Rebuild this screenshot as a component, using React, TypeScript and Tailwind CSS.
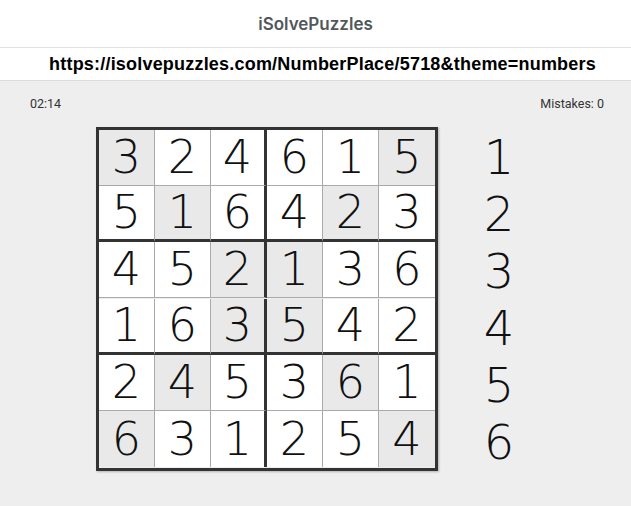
import React from "react";

const board = [
  [3, 2, 4, 6, 1, 5],
  [5, 1, 6, 4, 2, 3],
  [4, 5, 2, 1, 3, 6],
  [1, 6, 3, 5, 4, 2],
  [2, 4, 5, 3, 6, 1],
  [6, 3, 1, 2, 5, 4],
];

// diagonal cells get the grey fill
const isShaded = (r: number, c: number) => c === r || c === 5 - r;

const digitFont = { fontFamily: '"DejaVu Sans", sans-serif' };

function Cell({ r, c, value }: { r: number; c: number; value: number }) {
  const right =
    c === 5 ? "" : c === 2 ? "border-r-[3px] border-r-[#333]" : "border-r border-r-[#aaa]";
  const bottom =
    r === 5 ? "" : r === 1 || r === 3 ? "border-b-[3px] border-b-[#333]" : "border-b border-b-[#aaa]";
  return (
    <div
      className={`h-[56px] flex items-center justify-center text-[46px] font-extralight text-[#111] ${right} ${bottom} ${
        isShaded(r, c) ? "bg-[#e9e9e9]" : "bg-white"
      }`}
      style={digitFont}
    >
      {value}
    </div>
  );
}

export default function App() {
  return (
    <div className="min-h-[506px] bg-[#eeeeee] font-['Roboto',sans-serif]">
      {/* Header */}
      <header className="h-12 bg-white border-b border-[#e2e2e2] flex items-center justify-center pt-[3px]">
        <span className="text-[17px] font-semibold text-[#51575b] font-['Inter',sans-serif]">
          iSolvePuzzles
        </span>
      </header>

      <div className="h-[33px] bg-white border-b border-[#dcdcdc] flex items-center justify-center pl-[14px]">
        <span className="text-[18px] font-bold tracking-[0.2px] text-black font-['Liberation_Sans',sans-serif]">
          https://isolvepuzzles.com/NumberPlace/5718&amp;theme=numbers
        </span>
      </div>

      <main className="pt-[14px]">
        <div className="flex justify-between px-[30px] pr-[27px] text-[12.5px] text-[#333]">
          <span>02:14</span>
          <span>Mistakes: 0</span>
        </div>

        <div className="flex mt-[13px] pl-[96px]">
          <div className="w-[342px] grid grid-cols-6 border-[3px] border-[#333] shadow-[1px_1px_2px_rgba(0,0,0,0.25)]">
            {board.map((row, r) =>
              row.map((v, c) => <Cell key={`${r}-${c}`} r={r} c={c} value={v} />)
            )}
          </div>

          {/* number picker */}
          <div className="ml-[33px] w-[56px] pt-[2px] flex flex-col">
            {[1, 2, 3, 4, 5, 6].map((n) => (
              <div
                key={n}
                className="h-[57px] flex items-center justify-center text-[48px] font-extralight text-[#111]"
                style={digitFont}
              >
                {n}
              </div>
            ))}
          </div>
        </div>
      </main>
    </div>
  );
}
